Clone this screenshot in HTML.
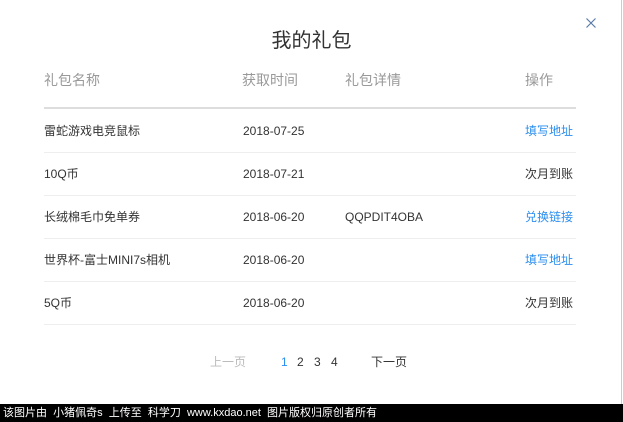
<!DOCTYPE html><html><head><style>
body{margin:0;width:623px;height:422px;background:#fff;position:relative;overflow:hidden;font-family:"Liberation Sans","Noto Sans CJK SC",sans-serif;}
.a{position:absolute;white-space:nowrap}
.t{font-size:20px;color:#333;left:0;width:623px;text-align:center;top:24px}
.h{font-size:14px;color:#999;top:70px}
.r{font-size:12px;color:#333;line-height:14px}
.b{color:#2b8ef0}
.l{position:absolute;left:44px;width:532px;height:1px;background:#eee}
</style></head><body>
<div style="position:absolute;right:1px;top:0;width:1px;height:404px;background:#ccc"></div>
<svg class="a" style="left:586px;top:18px" width="10" height="10"><path d="M0.5 0.5L9.5 9.5M9.5 0.5L0.5 9.5" stroke="#5a7ba8" stroke-width="1.2"/></svg>
<div class="a t">我的礼包</div>
<div class="a h" style="left:44px">礼包名称</div>
<div class="a h" style="left:242px">获取时间</div>
<div class="a h" style="left:345px">礼包详情</div>
<div class="a h" style="left:525px">操作</div>
<div class="l" style="top:107px;height:2px;background:#ddd"></div>
<div class="a r" style="left:44px;top:124px">雷蛇游戏电竞鼠标</div><div class="a r" style="left:243px;top:124px">2018-07-25</div><div class="a r b" style="left:525px;top:124px">填写地址</div>
<div class="l" style="top:152px"></div>
<div class="a r" style="left:44px;top:167px">10Q币</div><div class="a r" style="left:243px;top:167px">2018-07-21</div><div class="a r" style="left:525px;top:167px">次月到账</div>
<div class="l" style="top:195px"></div>
<div class="a r" style="left:44px;top:210px">长绒棉毛巾免单券</div><div class="a r" style="left:243px;top:210px">2018-06-20</div><div class="a r" style="left:345px;top:210px">QQPDIT4OBA</div><div class="a r b" style="left:525px;top:210px">兑换链接</div>
<div class="l" style="top:238px"></div>
<div class="a r" style="left:44px;top:253px">世界杯-富士MINI7s相机</div><div class="a r" style="left:243px;top:253px">2018-06-20</div><div class="a r b" style="left:525px;top:253px">填写地址</div>
<div class="l" style="top:281px"></div>
<div class="a r" style="left:44px;top:296px">5Q币</div><div class="a r" style="left:243px;top:296px">2018-06-20</div><div class="a r" style="left:525px;top:296px">次月到账</div>
<div class="l" style="top:324px"></div>
<div class="a r" style="left:210px;top:355px;color:#bbb">上一页</div>
<div class="a r b" style="left:281px;top:355px">1</div>
<div class="a r" style="left:297px;top:355px">2</div>
<div class="a r" style="left:314px;top:355px">3</div>
<div class="a r" style="left:331px;top:355px">4</div>
<div class="a r" style="left:371px;top:355px">下一页</div>
<div style="position:absolute;left:0;top:404px;width:623px;height:18px;background:#000;color:#fff;font-size:11px;line-height:18px;padding-left:3px;white-space:pre">该图片由  小猪佩奇s  上传至  科学刀  www.kxdao.net  图片版权归原创者所有</div>
</body></html>
